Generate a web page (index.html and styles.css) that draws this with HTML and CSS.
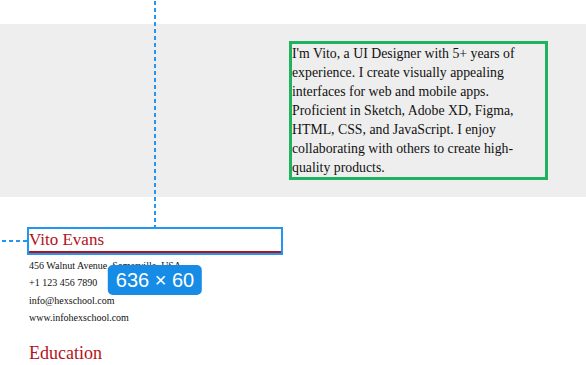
FILE: index.html
```html
<!DOCTYPE html>
<html lang="en">
<head>
    <meta charset="UTF-8">
    <meta name="viewport" content="width=device-width, initial-scale=1.0">
    <title>Vito Evans - Resume</title>
    <link rel="stylesheet" href="styles.css">
</head>
<body>
    <header class="about">
        <p class="about-text">I'm Vito, a UI Designer with 5+ years of experience. I create visually appealing interfaces for web and mobile apps. Proficient in Sketch, Adobe XD, Figma, HTML, CSS, and JavaScript. I enjoy collaborating with others to create high-quality products.</p>
    </header>

    <section class="contact">
        <div class="name-wrap">
            <h1 class="name">Vito Evans</h1>
            <span class="guide guide-v"></span>
            <span class="guide guide-h"></span>
            <span class="size-badge">636 × 60</span>
        </div>
        <ul class="contact-list">
            <li>456 Walnut Avenue, Somerville, USA</li>
            <li>+1 123 456 7890</li>
            <li>info@hexschool.com</li>
            <li>www.infohexschool.com</li>
        </ul>
    </section>

    <h2 class="section-title">Education</h2>
</body>
</html>
```

FILE: styles.css
```css
body {
    margin: 0;
    padding: 0;
    font-family: 'Liberation Serif', 'Times New Roman', serif;
    color: #111;
    background: #fff;
    overflow: hidden;
}

.about {
    margin-top: 24px;
    height: 173px;
    background: #eeeeee;
    display: flex;
    justify-content: flex-end;
    align-items: flex-start;
    padding: 17px 38px 0 0;
    box-sizing: border-box;
}

.about-text {
    width: 259px;
    margin: 0;
    border: 3px solid #1fb35f;
    box-sizing: border-box;
    font-size: 13.8px;
    line-height: 19px;
}

.contact {
    width: 252px;
    margin: 32px 0 0 29px;
}

.name-wrap {
    position: relative;
}

.name {
    margin: 0;
    font-size: 17px;
    font-weight: normal;
    line-height: 22px;
    color: #b3121a;
    border-bottom: 2px solid #b3121a;
    outline: 2px solid #2196f3;
}

/* measurement overlay */
.guide {
    position: absolute;
}

.guide-v {
    left: calc(50% - 1px);
    bottom: calc(100% + 2px);
    width: 2px;
    height: 240px;
    background: repeating-linear-gradient(to bottom, #2196f3 0 4px, transparent 4px 7px);
}

.guide-h {
    right: calc(100% + 2px);
    top: calc(50% - 1px);
    width: 40px;
    height: 2px;
    background: repeating-linear-gradient(to left, #2196f3 0 4px, transparent 4px 7px);
}

.size-badge {
    position: absolute;
    top: calc(100% + 12px);
    left: 50%;
    transform: translateX(-50%);
    height: 30px;
    line-height: 30px;
    padding: 0 8px;
    border-radius: 5px;
    background: #168ce6;
    color: #fff;
    font-family: 'Liberation Sans', Arial, sans-serif;
    font-size: 20px;
    white-space: nowrap;
}

.contact-list {
    list-style: none;
    margin: 4px 0 0;
    padding: 0;
    font-size: 10px;
    line-height: 17.4px;
}

.section-title {
    margin: 15px 0 0 29px;
    font-size: 18px;
    font-weight: normal;
    line-height: 22px;
    color: #b3121a;
}
```
